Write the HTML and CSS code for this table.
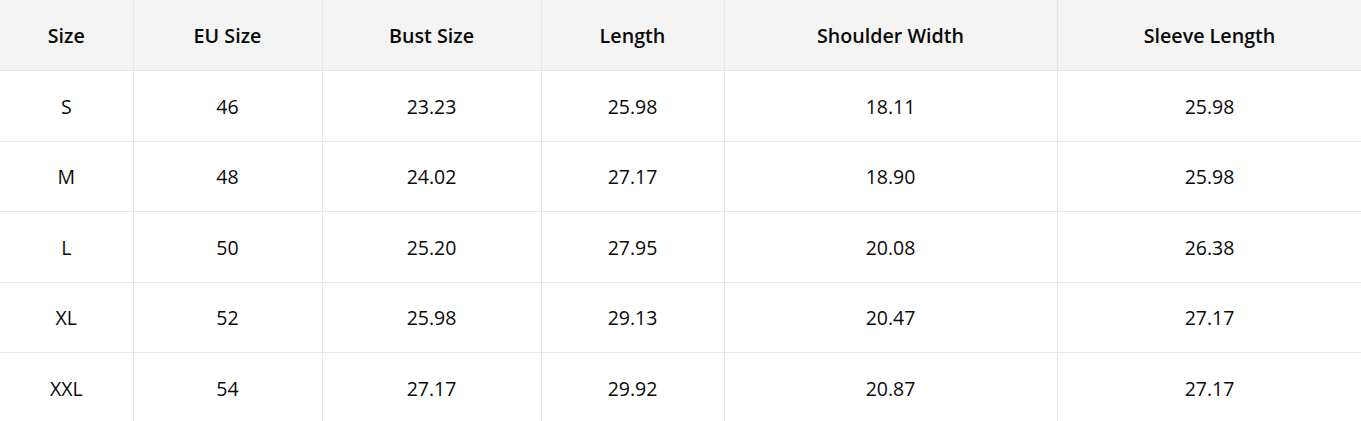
FILE: index.html
```html
<!DOCTYPE html>
<html>
<head>
<meta charset="utf-8">
<link rel="stylesheet" href="styles.css">
</head>
<body>
<table class="size-table">
  <colgroup>
    <col class="c1"><col class="c2"><col class="c3"><col class="c4"><col class="c5"><col class="c6">
  </colgroup>
  <thead>
    <tr><th>Size</th><th>EU Size</th><th>Bust Size</th><th>Length</th><th>Shoulder Width</th><th>Sleeve Length</th></tr>
  </thead>
  <tbody>
    <tr><td>S</td><td>46</td><td>23.23</td><td>25.98</td><td>18.11</td><td>25.98</td></tr>
    <tr><td>M</td><td>48</td><td>24.02</td><td>27.17</td><td>18.90</td><td>25.98</td></tr>
    <tr><td>L</td><td>50</td><td>25.20</td><td>27.95</td><td>20.08</td><td>26.38</td></tr>
    <tr><td>XL</td><td>52</td><td>25.98</td><td>29.13</td><td>20.47</td><td>27.17</td></tr>
    <tr><td>XXL</td><td>54</td><td>27.17</td><td>29.92</td><td>20.87</td><td>27.17</td></tr>
  </tbody>
</table>
</body>
</html>
```
FILE: styles.css
```css
html, body {
  margin: 0;
  padding: 0;
  background: #fff;
}
.size-table {
  border-collapse: collapse;
  table-layout: fixed;
  width: 1362px;
  font-family: "Open Sans", "Noto Sans", sans-serif;
  font-size: 19.5px;
  color: #0a0a0a;
}
.c1 { width: 133px; }
.c2 { width: 189px; }
.c3 { width: 219px; }
.c4 { width: 183px; }
.c5 { width: 333px; }
.c6 { width: 305px; }
.size-table th,
.size-table td {
  border: 1px solid #e6e6e6;
  text-align: center;
  padding: 0;
}
.size-table th {
  height: 69px;
  padding-top: 1px;
  background: #f4f4f4;
  font-weight: 600;
  font-size: 19.7px;
}
.size-table td {
  height: 68.5px;
  padding-top: 1px;
  font-weight: 400;
}
.size-table thead tr:first-child th { border-top: none; }
.size-table th:first-child,
.size-table td:first-child { border-left: none; }
```
